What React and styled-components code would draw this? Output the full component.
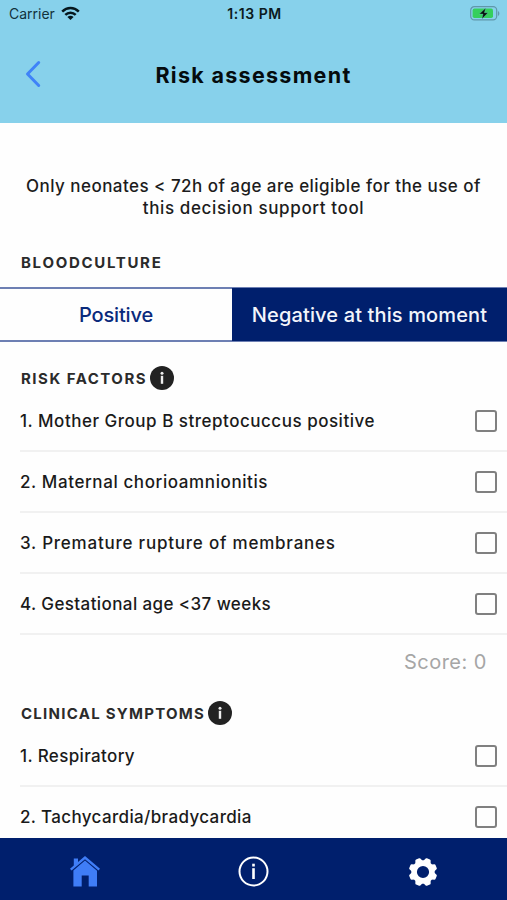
import React, { useState } from 'react'
import styled, { createGlobalStyle } from 'styled-components'

const GlobalStyle = createGlobalStyle`
  * { box-sizing: border-box; }
  body {
    margin: 0;
    background: #fefefe;
    font-family: Inter, "Open Sans", sans-serif;
    overflow: hidden;
  }
`

const Screen = styled.div`
  width: 507px;
  height: 900px;
  display: flex;
  flex-direction: column;
  overflow: hidden;
  background: #fefefe;
`

const Header = styled.header`
  flex: none;
  height: 123px;
  background: #87d1eb;
`

const StatusBar = styled.div`
  height: 27px;
  display: grid;
  grid-template-columns: 1fr auto 1fr;
  align-items: center;
  padding: 0 7px 0 9px;
  font-size: 14px;
  color: #12323c;
`

const Carrier = styled.div`
  display: flex;
  align-items: center;
  gap: 6px;
`

const Clock = styled.div`
  font-size: 14px;
  font-weight: 600;
  color: #0b1a20;
  letter-spacing: 0.55px;
`

const Battery = styled.div`
  display: flex;
  justify-content: flex-end;
`

const NavRow = styled.div`
  height: 94px;
  display: grid;
  grid-template-columns: 65px 1fr 65px;
  align-items: center;
`

const BackButton = styled.button`
  border: 0;
  background: none;
  padding: 0;
  height: 30px;
  display: flex;
  justify-content: center;
  align-items: center;
`

const Title = styled.h1`
  margin: 0;
  padding-top: 2px;
  text-align: center;
  font-size: 21.5px;
  line-height: 26px;
  font-weight: 650;
  color: #050b0d;
  white-space: nowrap;
  letter-spacing: 1.3px;
`

const Content = styled.main`
  flex: 1;
  min-height: 0;
  overflow: hidden;
  padding-top: 52px;
`

const Intro = styled.p`
  margin: 0;
  text-align: center;
  font-size: 17px;
  line-height: 22px;
  font-weight: 500;
  color: #1c1c1c;
  white-space: nowrap;
`

const Tracked = styled.span`
  letter-spacing: ${({ $track }) => $track || 0}px;
`

const SectionTitle = styled.h2`
  margin: 0;
  height: 24px;
  margin-top: ${({ $top }) => $top}px;
  padding-left: 21px;
  display: flex;
  align-items: center;
  gap: 2.5px;
  font-size: 15px;
  font-weight: 700;
  color: #2b2b2b;
  white-space: nowrap;
`

const Segment = styled.div`
  display: flex;
  height: 55px;
  margin-top: 13px;
  border-top: 2px solid #6d7fb3;
  border-bottom: 2px solid #6d7fb3;
`

const SegmentButton = styled.button`
  flex: ${({ $width }) => ($width ? `0 0 ${$width}px` : 1)};
  border: 0;
  padding: 0;
  font-family: inherit;
  font-size: 20px;
  font-weight: 500;
  white-space: nowrap;
  color: ${({ $active }) => ($active ? '#f3f5fb' : '#0a2a7c')};
  background: ${({ $active }) => ($active ? '#001f6d' : '#fefefe')};
  letter-spacing: ${({ $track }) => $track || 0}px;
  /* the filled half covers the light rules of the bar */
  margin: ${({ $active }) => ($active ? '-1px 0' : 0)};
`

const List = styled.div`
  padding: 1px 0 0 20px;
`

const Row = styled.label`
  height: 61px;
  display: flex;
  justify-content: space-between;
  align-items: center;
  padding: 0 10px 0 0;
  border-bottom: 2px solid #f1f1f1;
  font-size: 17px;
  font-weight: 500;
  color: #1a1a1a;
  white-space: nowrap;
`

const Check = styled.input`
  appearance: none;
  margin: 0;
  width: 22px;
  height: 22px;
  border: 2px solid #808080;
  border-radius: 3px;
  &:checked {
    background: #808080;
  }
`

const Score = styled.div`
  height: 53px;
  padding-right: 20px;
  display: flex;
  justify-content: flex-end;
  align-items: center;
  font-size: 20px;
  color: #a6a6a6;
`

const TabBar = styled.nav`
  flex: none;
  height: 62px;
  display: grid;
  grid-template-columns: repeat(3, 1fr);
  background: #001f6d;
`

const Tab = styled.a`
  display: flex;
  justify-content: center;
  align-items: center;
  padding-top: 5px;
`

const WifiIcon = () => (
  <svg width="19" height="15" viewBox="0 0 19 15">
    <g fill="none" stroke="#06171d" strokeWidth="2.5">
      <path d="M1.2 5.6C6 .9 13 .9 17.8 5.6" />
      <path d="M4.3 8.9C7.2 6 11.8 6 14.7 8.9" />
    </g>
    <path d="M9.5 14 6.4 10.9C8.1 9.4 10.9 9.4 12.6 10.9Z" fill="#06171d" />
  </svg>
)

const BatteryIcon = () => (
  <svg width="30" height="15" viewBox="0 0 30 15">
    <rect x=".7" y=".7" width="26" height="13.2" rx="3.6" fill="none" stroke="#6197aa" strokeWidth="1.2" />
    <path d="M28 5V10C29.8 9.3 29.8 5.7 28 5Z" fill="#6197aa" />
    <rect x="2.6" y="2.6" width="20.4" height="9.4" rx="1.8" fill="#35cf5c" />
    <path d="M15.7 1.9 9.3 8.1H13L11.9 13 18 6.7H14.4Z" fill="#06120c" stroke="#87d1eb" strokeWidth=".3" />
  </svg>
)

const InfoBadge = () => (
  <svg width="24" height="24" viewBox="0 0 24 24">
    <circle cx="12" cy="12" r="12" fill="#222" />
    <circle cx="12" cy="7.3" r="1.5" fill="#eee" />
    <rect x="10.8" y="9.8" width="2.4" height="8" fill="#eee" />
  </svg>
)

const HomeIcon = () => (
  <svg width="30" height="31" viewBox="0 0 30 31">
    <path d="M3.8 2.5H8V6L15 0 30 12.8 28.5 14.6 15 3.3 1.5 14.6 0 12.8 3.8 9.5Z" fill="#3f7df7" />
    <path d="M15 4.6 27 14.8V30.4H18.7V19.5H11.7V30.4H3.4V14.4Z" fill="#3f7df7" />
  </svg>
)

const InfoIcon = () => (
  <svg width="31" height="31" viewBox="0 0 31 31">
    <circle cx="15.5" cy="15.5" r="14" fill="none" stroke="#fff" strokeWidth="2" />
    <rect x="14.2" y="7.7" width="2.6" height="2.8" fill="#fff" />
    <rect x="14.2" y="12.2" width="2.6" height="10.8" fill="#fff" />
  </svg>
)

const GearIcon = () => (
  <svg width="30" height="30" viewBox="-15 -15 30 30">
    <circle r="8.9" fill="none" stroke="#fff" strokeWidth="5.6" />
    {[22.5, 67.5, 112.5, 157.5, 202.5, 247.5, 292.5, 337.5].map((angle) => (
      <path
        key={angle}
        transform={`rotate(${angle})`}
        d="M-3.9 -10.5 -2.7 -13.5Q-2.4 -14.2 -1.6 -14.2H1.6Q2.4 -14.2 2.7 -13.5L3.9 -10.5Z"
        fill="#fff"
      />
    ))}
  </svg>
)

const riskFactors = [
  { label: '1. Mother Group B streptocuccus positive', track: 0.51 },
  { label: '2. Maternal chorioamnionitis', track: 0.6 },
  { label: '3. Premature rupture of membranes', track: 0.78 },
  { label: '4. Gestational age <37 weeks', track: 0.4 },
]

const symptoms = [
  { label: '1. Respiratory', track: 0.36 },
  { label: '2. Tachycardia/bradycardia', track: 0.36 },
]

const CheckList = ({ items }) => (
  <List>
    {items.map((item) => (
      <Row key={item.label}>
        <Tracked $track={item.track}>{item.label}</Tracked>
        <Check type="checkbox" />
      </Row>
    ))}
  </List>
)

const App = () => {
  const [culture, setCulture] = useState('negative')

  return (
    <Screen>
      <GlobalStyle />
      <Header>
        <StatusBar>
          <Carrier>Carrier <WifiIcon /></Carrier>
          <Clock>1:13 PM</Clock>
          <Battery><BatteryIcon /></Battery>
        </StatusBar>
        <NavRow>
          <BackButton aria-label="Back">
            <svg width="16" height="28" viewBox="0 0 16 28">
              <path d="M13.7 2.5 2.5 14 13.7 25.5" fill="none" stroke="#3f83f8" strokeWidth="3" strokeLinecap="round" strokeLinejoin="round" />
            </svg>
          </BackButton>
          <Title>Risk assessment</Title>
        </NavRow>
      </Header>

      <Content>
        <Intro>
          <Tracked $track={0.46}>Only neonates &lt; 72h of age are eligible for the use of</Tracked>
          <br />
          <Tracked $track={0.62}>this decision support tool</Tracked>
        </Intro>

        <SectionTitle $top={31}>
          <Tracked $track={1.7}>BLOODCULTURE</Tracked>
        </SectionTitle>
        <Segment>
          <SegmentButton $width={232} $track={-0.15} $active={culture === 'positive'} onClick={() => setCulture('positive')}>
            Positive
          </SegmentButton>
          <SegmentButton $track={0.13} $active={culture === 'negative'} onClick={() => setCulture('negative')}>
            Negative at this moment
          </SegmentButton>
        </Segment>

        <SectionTitle $top={24}>
          <Tracked $track={1.5}>RISK FACTORS</Tracked>
          <InfoBadge />
        </SectionTitle>
        <CheckList items={riskFactors} />
        <Score>
          <Tracked $track={0.5}>Score: 0</Tracked>
        </Score>

        <SectionTitle $top={13}>
          <Tracked $track={1.26}>CLINICAL SYMPTOMS</Tracked>
          <InfoBadge />
        </SectionTitle>
        <CheckList items={symptoms} />
      </Content>

      <TabBar>
        <Tab><HomeIcon /></Tab>
        <Tab><InfoIcon /></Tab>
        <Tab><GearIcon /></Tab>
      </TabBar>
    </Screen>
  )
}

export default App
